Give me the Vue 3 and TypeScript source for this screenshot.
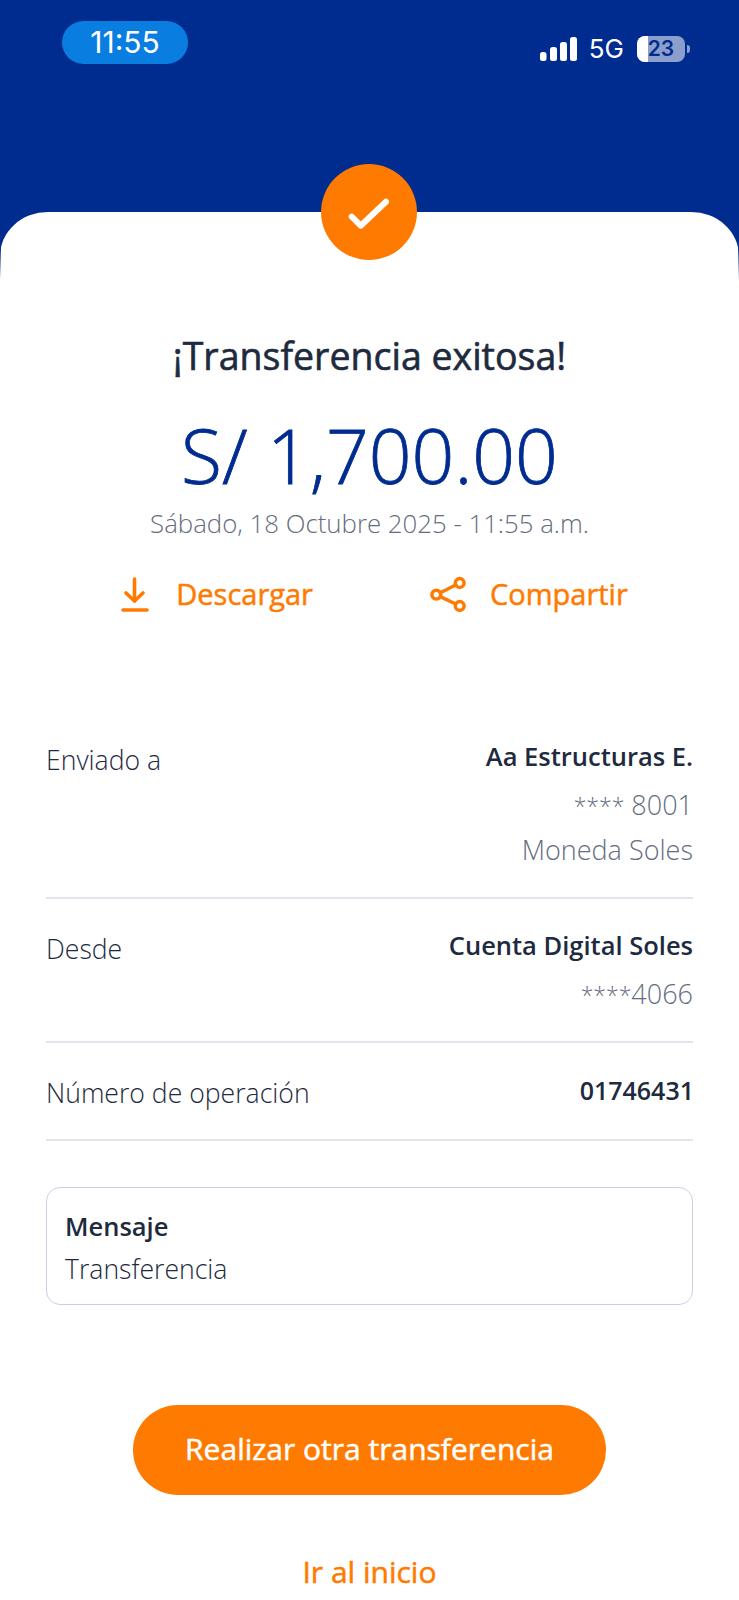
<script setup lang="ts">
interface Row { label: string; strong: string; subs: { mask: string; text: string }[]; kind: string }
const rows: Row[] = [
  {
    label: 'Enviado a',
    strong: 'Aa Estructuras E.',
    subs: [
      { mask: '****', text: ' 8001' },
      { mask: '', text: 'Moneda Soles' }
    ],
    kind: 'first'
  },
  { label: 'Desde', strong: 'Cuenta Digital Soles', subs: [{ mask: '****', text: '4066' }], kind: 'second' },
  { label: 'Número de operación', strong: '01746431', subs: [], kind: 'third' }
]
</script>

<template>
  <div class="screen">
    <header class="top">
      <div class="status">
        <div class="time">11:55</div>
        <div class="indicators">
          <svg class="signal" width="37" height="24" viewBox="0 0 37 24" fill="#fff">
            <rect x="0" y="15" width="6.5" height="9" rx="2.5" />
            <rect x="10" y="10" width="7" height="14" rx="2.5" />
            <rect x="20" y="5" width="7" height="19" rx="2.5" />
            <rect x="30" y="0" width="7" height="24" rx="2.5" />
          </svg>
          <span class="net">5G</span>
          <div class="battery">
            <div class="fill"></div>
            <span class="level">23</span>
          </div>
          <div class="nub"></div>
        </div>
      </div>
    </header>
    <main class="card">
      <div class="badge">
        <svg width="48" height="40" viewBox="0 0 48 40" fill="none" stroke="#fff" stroke-width="6" stroke-linecap="round" stroke-linejoin="round">
          <path d="M6.7 24.7 L15.7 33.7 L41 9.7" />
        </svg>
      </div>
      <h1 class="title">¡Transferencia exitosa!</h1>
      <div class="amount">S/ 1,700.00</div>
      <div class="date">Sábado, 18 Octubre 2025 - 11:55 a.m.</div>
      <div class="actions">
        <div class="action">
          <svg width="28" height="36" viewBox="0 0 28 36" fill="none" stroke="#ff7a00" stroke-width="3.6" stroke-linecap="round" stroke-linejoin="round">
            <path d="M13.5 3 V25" />
            <path d="M5 17 L13.5 25 L22 17" />
            <path d="M2 34 H26" />
          </svg>
          <span>Descargar</span>
        </div>
        <div class="action share">
          <svg width="37" height="37" viewBox="0 0 37 37" fill="none" stroke="#ff7a00" stroke-width="3.5" stroke-linecap="round" stroke-linejoin="round">
            <circle cx="7.3" cy="18.7" r="4.4" />
            <circle cx="30.7" cy="7" r="4.4" />
            <circle cx="30.7" cy="30" r="4.4" />
            <path d="M11.3 16.7 L26.7 9" />
            <path d="M11.3 20.7 L26.7 28" />
          </svg>
          <span>Compartir</span>
        </div>
      </div>
      <section class="rows">
        <div v-for="row in rows" :key="row.label" class="row" :class="row.kind">
          <div class="label">{{ row.label }}</div>
          <div class="values">
            <div class="strong">{{ row.strong }}</div>
            <div v-for="sub in row.subs" :key="sub.text" class="sub"><span class="mask">{{ sub.mask }}</span>{{ sub.text }}</div>
          </div>
        </div>
      </section>
      <section class="message">
        <div class="msg-title">Mensaje</div>
        <div class="msg-body">Transferencia</div>
      </section>
      <button class="primary">Realizar otra transferencia</button>
      <div class="link">Ir al inicio</div>
    </main>
  </div>
</template>

<style>
html, body { margin: 0; background: #fff; }
</style>

<style scoped>
.screen {
  width: 739px;
  height: 1600px;
  overflow: hidden;
  background: #012c8f;
  font-family: "Open Sans", "Liberation Sans", sans-serif;
  color: #1e2a3e;
}
.top { height: 212px; }
.status {
  display: flex;
  justify-content: space-between;
  padding: 21px 49px 0 62px;
}
.time {
  width: 126px;
  height: 43px;
  border-radius: 22px;
  background: #0a7de0;
  color: #fff;
  font: 400 30px/43px "Inter", sans-serif;
  text-align: center;
}
.indicators {
  display: flex;
  align-items: center;
  height: 24px;
  margin-top: 16px;
}
.signal { margin-right: 12px; }
.net { color: #fff; font: 400 26px/24px "Inter", sans-serif; margin-right: 13px; }
.battery {
  position: relative;
  width: 48px;
  height: 26px;
  border-radius: 8px;
  background: rgba(255, 255, 255, 0.55);
  overflow: hidden;
  text-align: center;
}
.fill { position: absolute; left: 0; top: 0; bottom: 0; width: 11px; background: #fff; }
.level { position: relative; color: #012c8f; font: 600 21px/26px "Inter", sans-serif; }
.nub { width: 3px; height: 8px; margin-left: 2px; border-radius: 0 3px 3px 0; background: rgba(255, 255, 255, 0.55); }
.card {
  position: relative;
  height: 1388px;
  box-sizing: border-box;
  padding: 122px 46px 0;
  background: #fff;
  border-radius: 48px 48px 0 0 / 44px 44px 0 0;
}
.card::before,
.card::after {
  content: "";
  position: absolute;
  top: 32px;
  width: 1px;
  height: 36px;
  background: linear-gradient(#012c8f, rgba(1, 44, 143, 0));
}
.card::before { left: 0; }
.card::after { right: 0; }
.badge {
  position: absolute;
  left: 321px;
  top: -48px;
  width: 96px;
  height: 96px;
  border-radius: 50%;
  background: #ff7a00;
  display: flex;
  align-items: center;
  justify-content: center;
}
.title {
  margin: 0;
  font-size: 37.5px;
  font-weight: 400;
  -webkit-text-stroke: 0.6px #1e2a3e;
  line-height: 44px;
  text-align: center;
  color: #1e2a3e;
}
.amount {
  margin-top: 37px;
  font-size: 75px;
  font-weight: 300;
  -webkit-text-stroke: 0.8px #012c8f;
  line-height: 80px;
  text-align: center;
  color: #012c8f;
}
.date {
  margin-top: 10px;
  font-size: 25.8px;
  font-weight: 300;
  line-height: 36px;
  text-align: center;
  color: #656d80;
}
.actions {
  display: flex;
  justify-content: center;
  gap: 116px;
  margin-top: 33px;
  padding-left: 10px;
  height: 40px;
}
.action {
  display: flex;
  align-items: center;
  gap: 27px;
  color: #ff7a00;
  font-size: 29px;
  font-weight: 400;
  -webkit-text-stroke: 0.5px #ff7a00;
  line-height: 40px;
}
.action.share { gap: 24px; }
.rows { margin-top: 105px; }
.row {
  display: flex;
  justify-content: space-between;
  border-bottom: 2px solid #e1e5ec;
}
.row.first { padding: 19px 0 29px; }
.row.second { padding: 28px 0 29px; }
.row.third { padding: 29px 0 28px; }
.label {
  margin-top: 4px;
  font-size: 26.6px;
  font-weight: 300;
  line-height: 36px;
}
.third .label { margin-top: 3px; }
.values { text-align: right; }
.strong { font-size: 25.5px; font-weight: 600; line-height: 36px; }
.third .strong { font-size: 25px; margin-right: -1px; }
.sub { margin-top: 13px; font-size: 27px; font-weight: 300; line-height: 36px; color: #656d80; white-space: pre; }
.sub + .sub { margin-top: 9px; }
.mask { font-size: 23px; line-height: 1; }
.message {
  margin-top: 46px;
  box-sizing: border-box;
  height: 118px;
  padding: 20px 18px 0;
  border: 1px solid #c9d1e3;
  border-radius: 14px;
}
.msg-title { font-size: 25.5px; font-weight: 600; line-height: 36px; }
.msg-body { margin-top: 7px; font-size: 26.6px; font-weight: 300; line-height: 36px; }
.primary {
  display: block;
  width: 473px;
  height: 90px;
  margin: 100px auto 0;
  padding: 0 0 2px;
  border: 0;
  border-radius: 45px;
  background: #ff7a00;
  color: #fff;
  font: 400 30px/40px "Open Sans", sans-serif;
  -webkit-text-stroke: 0.5px #fff;
}
.link {
  margin-top: 57px;
  color: #ff7a00;
  font-size: 30px;
  font-weight: 400;
  -webkit-text-stroke: 0.5px #ff7a00;
  line-height: 40px;
  text-align: center;
}
</style>
